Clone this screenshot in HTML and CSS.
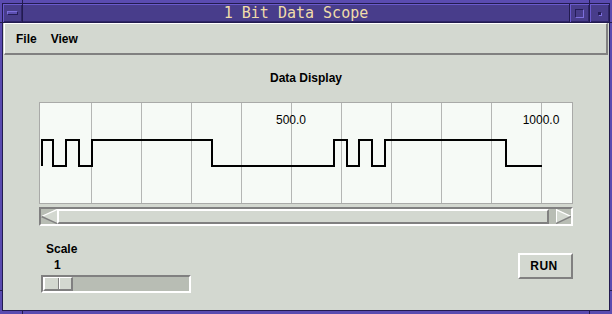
FILE: index.html
```html
<!DOCTYPE html>
<html>
<head>
<meta charset="utf-8">
<title>1 Bit Data Scope</title>
<link rel="stylesheet" href="styles.css">
</head>
<body>
<div class="window">
  <div class="frame">
    <div class="titlebar">
      <div class="tbtn"><span class="icon-menu"></span></div>
      <div class="title">1 Bit Data Scope</div>
      <div class="tbtn"><span class="icon-max"></span></div>
      <div class="tbtn"><span class="icon-min"></span></div>
    </div>
    <div class="client">
      <div class="menubar">
        <span class="menu-item">File</span>
        <span class="menu-item">View</span>
      </div>
      <div class="main">
        <div class="plot-title">Data Display</div>
        <div class="plot">
          <svg class="plot-svg" width="532" height="100" viewBox="0 0 532 100">
            <g class="grid">
              <line x1="51.5" y1="0" x2="51.5" y2="100"/>
              <line x1="101.5" y1="0" x2="101.5" y2="100"/>
              <line x1="151.5" y1="0" x2="151.5" y2="100"/>
              <line x1="201.5" y1="0" x2="201.5" y2="100"/>
              <line x1="251.5" y1="0" x2="251.5" y2="100"/>
              <line x1="301.5" y1="0" x2="301.5" y2="100"/>
              <line x1="351.5" y1="0" x2="351.5" y2="100"/>
              <line x1="401.5" y1="0" x2="401.5" y2="100"/>
              <line x1="451.5" y1="0" x2="451.5" y2="100"/>
              <line x1="501.5" y1="0" x2="501.5" y2="100"/>
            </g>
            <text class="axis" x="251" y="21">500.0</text>
            <text class="axis" x="501" y="21">1000.0</text>
            <path class="signal" d="M2,63 V37 H13 V63 H26 V37 H39 V63 H52 V37 H172 V63 H294 V37 H307 V63 H319 V37 H332 V63 H345 V37 H466 V63 H502"/>
          </svg>
        </div>
        <div class="scrollbar">
          <div class="arrow">
            <svg width="16" height="15" viewBox="0 0 16 15">
              <polygon points="0,7.5 16,0 16,15" fill="#d3d8d0"/>
              <line x1="0.5" y1="7.5" x2="16" y2="0.5" stroke="#ffffff" stroke-width="1.2"/>
              <line x1="0.5" y1="7.5" x2="16" y2="14.5" stroke="#808080" stroke-width="1.5"/>
            </svg>
          </div>
          <div class="thumb"></div>
          <div class="trough"></div>
          <div class="arrow arrow-right">
            <svg width="15" height="15" viewBox="0 0 15 15">
              <polygon points="0,0 15,7.5 0,15" fill="#d3d8d0"/>
              <line x1="0.5" y1="0" x2="0.5" y2="15" stroke="#ffffff"/>
              <line x1="0" y1="0.5" x2="15" y2="7.5" stroke="#ffffff" stroke-width="1.2"/>
              <line x1="0" y1="14.5" x2="15" y2="7.5" stroke="#808080" stroke-width="1.5"/>
            </svg>
          </div>
        </div>
        <div class="controls">
          <div class="scale">
            <div class="scale-label">Scale</div>
            <div class="scale-value">1</div>
            <div class="slider"><div class="slider-thumb"></div></div>
          </div>
          <button class="run">RUN</button>
        </div>
      </div>
    </div>
  </div>
  <span class="tick tick-v" style="left:22px;top:0"></span>
  <span class="tick tick-v" style="left:589px;top:0"></span>
  <span class="tick tick-v" style="left:22px;top:311px"></span>
  <span class="tick tick-v" style="left:589px;top:311px"></span>
  <span class="tick tick-h" style="left:0;top:22px"></span>
  <span class="tick tick-h" style="left:0;top:290px"></span>
  <span class="tick tick-h" style="left:610px;top:22px"></span>
  <span class="tick tick-h" style="left:610px;top:290px"></span>
</div>
</body>
</html>
```

FILE: styles.css
```css
* {
  box-sizing: border-box;
}

html, body {
  margin: 0;
  padding: 0;
}

body {
  width: 612px;
  height: 314px;
  overflow: hidden;
  background: #5a4bb0;
  font-family: "Liberation Sans", Arial, sans-serif;
  font-size: 12px;
  color: #000;
}

.window {
  position: relative;
  width: 612px;
  height: 314px;
  padding: 3px 2px;
  background: #5a4bb0;
}

.frame {
  height: 100%;
  border: 1px solid #221b4f;
  display: flex;
  flex-direction: column;
}

/* ---------- title bar ---------- */
.titlebar {
  flex: none;
  display: flex;
  gap: 1px;
  height: 19px;
  background: #221b4f;
  border-bottom: 1px solid #221b4f;
}

.tbtn {
  flex: none;
  width: 19px;
  height: 18px;
  background: #483d8b;
  box-shadow: inset 1px 1px 0 #6a5acd, inset -1px -1px 0 #2e2566;
  display: flex;
  align-items: center;
  justify-content: center;
}

.title {
  flex: 1;
  height: 18px;
  background: #483d8b;
  box-shadow: inset 0 1px 0 #6a5acd, inset 0 -1px 0 #2e2566;
  color: #f0dcaa;
  font-family: "DejaVu Sans Mono", "Liberation Mono", monospace;
  font-size: 15px;
  line-height: 18px;
  text-align: center;
  white-space: pre;
}

.icon-menu {
  display: block;
  width: 11px;
  height: 4px;
  background: #5c4fb0;
  border-style: solid;
  border-width: 1px;
  border-color: #7d6fdc #251d58 #251d58 #7d6fdc;
}

.icon-max {
  display: block;
  width: 9px;
  height: 9px;
  border-style: solid;
  border-width: 1px;
  border-color: #251d58 #7d6fdc #7d6fdc #251d58;
}

.icon-min {
  display: block;
  width: 3px;
  height: 3px;
  background: #251d58;
  box-shadow: 1px 1px 0 #7d6fdc;
}

/* ---------- client area ---------- */
.client {
  flex: 1;
  background: #d3d8d0;
  display: flex;
  flex-direction: column;
}

.menubar {
  flex: none;
  margin: 0 1px;
  height: 32px;
  border-style: solid;
  border-width: 1px 2px 2px 1px;
  border-color: #ffffff #808080 #808080 #ffffff;
  padding: 8px 0 0 4px;
  display: flex;
  font-weight: bold;
  line-height: 14px;
}

.menu-item {
  padding: 0 7px;
}

.main {
  padding: 16px 36px 0;
}

.plot-title {
  text-align: center;
  font-weight: bold;
  line-height: 14px;
}

.plot {
  margin-top: 17px;
  height: 102px;
  border: 1px solid #a9aaa8;
  background: #f6faf6;
}

.plot-svg {
  display: block;
}

.grid line {
  stroke: #b4b6b4;
  stroke-width: 1;
}

.axis {
  font-family: "Liberation Sans", Arial, sans-serif;
  font-size: 12px;
  text-anchor: middle;
  fill: #000;
}

.signal {
  fill: none;
  stroke: #000;
  stroke-width: 2;
  stroke-linejoin: miter;
}

/* ---------- scrollbar ---------- */
.scrollbar {
  margin-top: 3px;
  height: 19px;
  border-style: solid;
  border-width: 2px;
  border-color: #808080 #ffffff #ffffff #808080;
  background: #b8bdb4;
  display: flex;
}

.arrow {
  flex: none;
  width: 16px;
  height: 15px;
}

.arrow svg {
  display: block;
}

.arrow-right {
  width: 15px;
}

.thumb {
  flex: none;
  width: 492px;
  height: 15px;
  border-style: solid;
  border-width: 2px;
  border-color: #ffffff #808080 #808080 #ffffff;
  background: #d3d8d0;
}

.trough {
  flex: 1;
}

/* ---------- controls ---------- */
.controls {
  display: flex;
  justify-content: space-between;
  align-items: flex-start;
  margin-top: 16px;
}

.scale {
  width: 152px;
}

.scale-label {
  padding-left: 7px;
  font-weight: bold;
  line-height: 14px;
}

.scale-value {
  margin-top: 2px;
  padding-left: 15px;
  font-weight: bold;
  line-height: 14px;
}

.slider {
  margin: 3px 0 0 2px;
  width: 150px;
  height: 18px;
  border-style: solid;
  border-width: 2px;
  border-color: #808080 #ffffff #ffffff #808080;
  background: #b8bdb4;
  display: flex;
}

.slider-thumb {
  width: 30px;
  height: 14px;
  border-style: solid;
  border-width: 1px 2px 2px 2px;
  border-color: #ffffff #808080 #808080 #ffffff;
  background:
    linear-gradient(to right,
      transparent 0, transparent 13px,
      #808080 13px, #808080 14px,
      #ffffff 14px, #ffffff 15px,
      transparent 15px),
    #d3d8d0;
}

.run {
  margin: 11px 0 0 0;
  width: 55px;
  height: 26px;
  padding: 0 3px 0 0;
  border-style: solid;
  border-width: 2px;
  border-color: #ffffff #808080 #808080 #ffffff;
  background: #d3d8d0;
  color: #000;
  font-family: "Liberation Sans", Arial, sans-serif;
  font-weight: bold;
  font-size: 12px;
  line-height: 22px;
  letter-spacing: 0.5px;
}

/* ---------- frame resize notches ---------- */
.tick {
  position: absolute;
  background: #221b4f;
}

.tick-v {
  width: 1px;
  height: 3px;
}

.tick-h {
  width: 2px;
  height: 1px;
}
```
